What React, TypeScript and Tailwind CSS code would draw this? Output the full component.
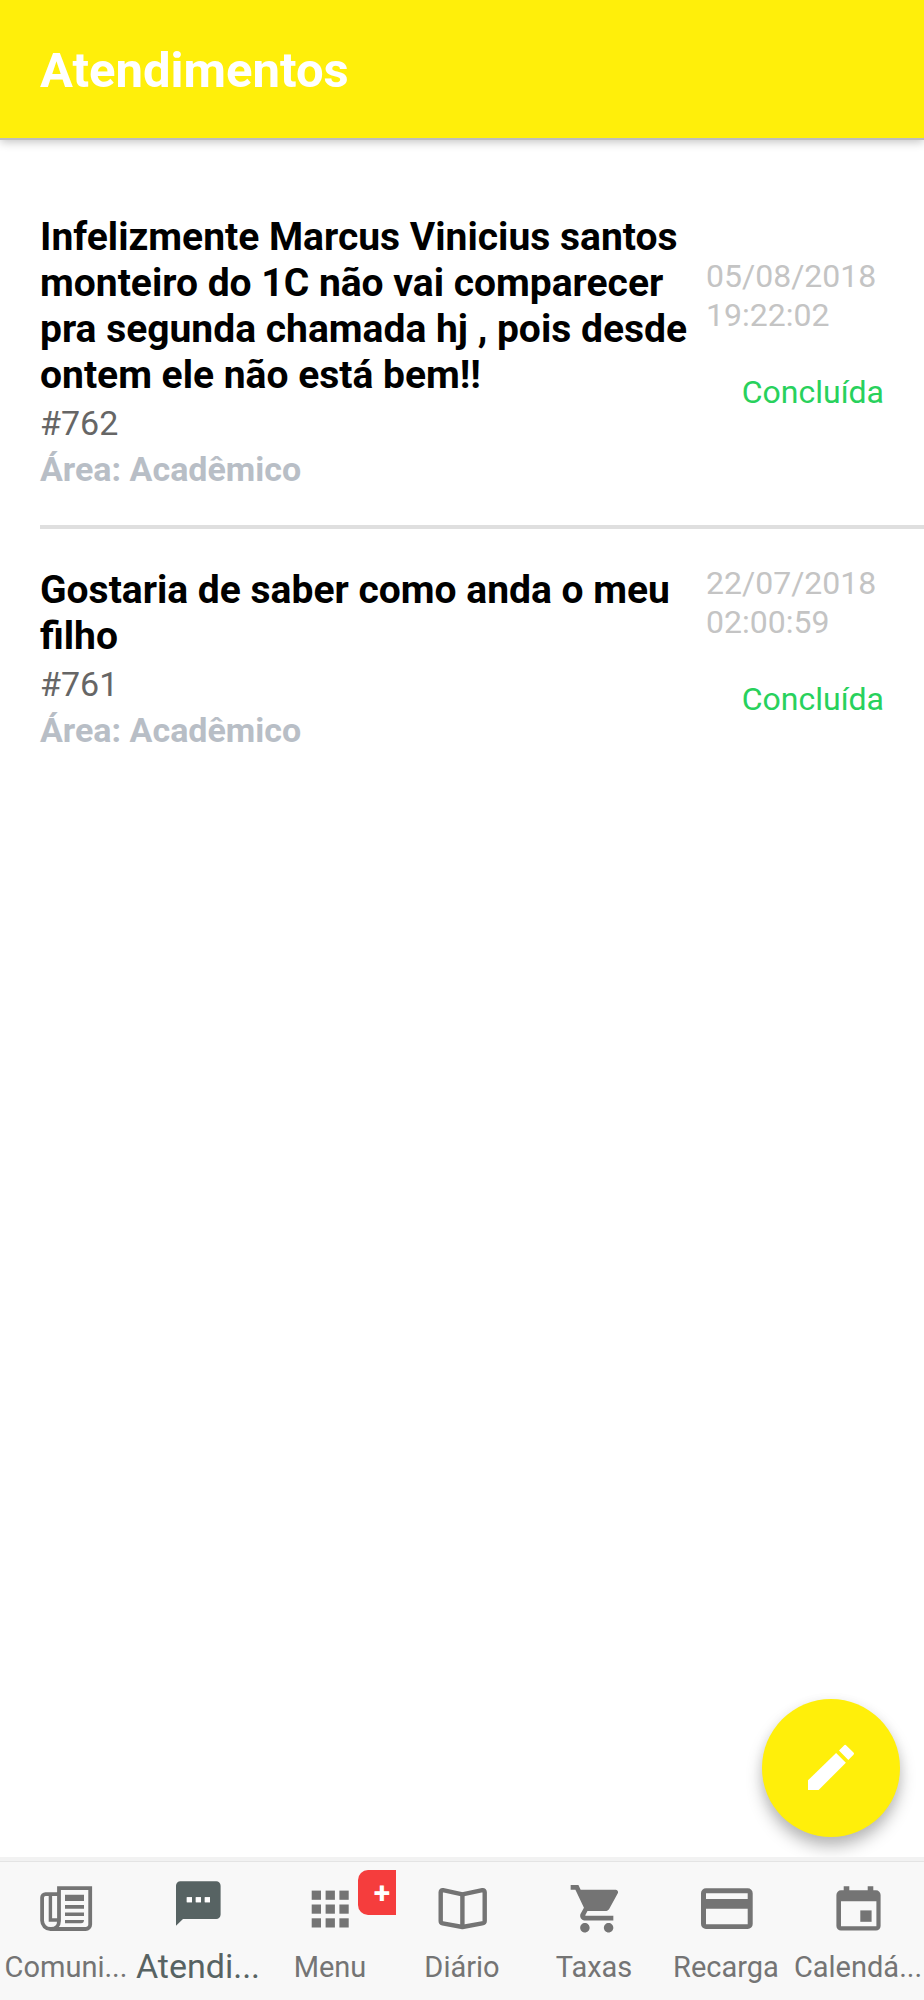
import type { ReactNode } from "react";

type Ticket = {
  id: string;
  title: string;
  area: string;
  date: string;
  time: string;
  status: string;
};

const tickets: Ticket[] = [
  {
    id: "#762",
    title:
      "Infelizmente Marcus Vinicius santos monteiro do 1C não vai comparecer pra segunda chamada hj , pois desde ontem ele não está bem!!",
    area: "Acadêmico",
    date: "05/08/2018",
    time: "19:22:02",
    status: "Concluída",
  },
  {
    id: "#761",
    title: "Gostaria de saber como anda o meu filho",
    area: "Acadêmico",
    date: "22/07/2018",
    time: "02:00:59",
    status: "Concluída",
  },
];

function Icon({ children }: { children: ReactNode }) {
  return (
    <svg viewBox="0 0 62 62" className="size-[62px] shrink-0" fill="currentColor" aria-hidden="true">
      {children}
    </svg>
  );
}

function NewsIcon() {
  return (
    <Icon>
      <g fill="none" stroke="currentColor" strokeWidth="3.8">
        <path d="M24 43V10.1H55.2V46.5a4.5 4.5 0 0 1-4.5 4.5H15.5A8.4 8.4 0 0 1 7.1 42.6V19.5a3.4 3.4 0 0 1 3.4-3.4H23" />
        <path d="M24 43c0 4.5-3 8-8 8" />
        <path d="M15.4 17V42H23" strokeWidth="3.4" />
      </g>
      <path d="M30 16.7h19V23H30zM30 27h19v3.7H30zM30 34.6h19v3.5H30zM30 42h19c0 2-1 3.3-3 3.3H30z" />
    </Icon>
  );
}

function ChatIcon() {
  return (
    <Icon>
      <path
        fillRule="evenodd"
        d="M13.4 8.3H49.2a4.4 4.4 0 0 1 4.4 4.4V41.6a4.4 4.4 0 0 1-4.4 4.4H16L9 52.8V12.7a4.4 4.4 0 0 1 4.4-4.4zM19.8 24.3v5H25v-5zM28.8 24.3v5H34v-5zM37.8 24.3v5H43v-5z"
      />
      <path fill="#fff" d="M19.8 24.3H25v5h-5.2zM28.8 24.3H34v5h-5.2zM37.8 24.3H43v5h-5.2z" />
    </Icon>
  );
}

function GridIcon() {
  return (
    <Icon>
      {[12.6, 26.5, 40.3].map((y) =>
        [12.7, 26.6, 40.4].map((x) => <rect key={`${x}-${y}`} x={x} y={y} width="9.3" height="9.2" />)
      )}
    </Icon>
  );
}

function BookIcon() {
  return (
    <Icon>
      <g fill="none" stroke="currentColor" strokeWidth="4.4" strokeLinejoin="round">
        <path d="M31.4 16.4 12 12.2q-2.3-.3-2.3 2V43q0 2 2 2.4L31.4 49l19.7-3.6q2.6-.4 2.6-2.4V14.2q0-2.3-2.3-2z" />
        <path d="M31.4 16.4V49" />
      </g>
    </Icon>
  );
}

function CartIcon() {
  return (
    <Icon>
      <g transform="translate(5.3 2.3) scale(2.37)">
        <path d="M7 18c-1.1 0-1.99.9-1.99 2S5.9 22 7 22s2-.9 2-2-.9-2-2-2zM1 2v2h2l3.6 7.59-1.35 2.45c-.16.28-.25.61-.25.96 0 1.1.9 2 2 2h12v-2H7.42c-.14 0-.25-.11-.25-.25l.03-.12.9-1.63h7.45c.75 0 1.41-.41 1.75-1.03l3.58-6.49c.08-.14.12-.31.12-.48 0-.55-.45-1-1-1H5.21l-.94-2H1zm16 16c-1.1 0-1.99.9-1.99 2s.89 2 1.99 2 2-.9 2-2-.9-2-2-2z" />
      </g>
    </Icon>
  );
}

function CardIcon() {
  return (
    <Icon>
      <path
        fillRule="evenodd"
        d="M11 10.2H52.7a5 5 0 0 1 5 5V46a5 5 0 0 1-5 5H11a5 5 0 0 1-5-5V15.2a5 5 0 0 1 5-5zM11 15.3V21H52.7V15.3zM11 30.8V46.2H52.7V30.8z"
      />
    </Icon>
  );
}

function CalendarIcon() {
  return (
    <Icon>
      <path
        fillRule="evenodd"
        d="M16.7 8.3h5.6v4H40.7v-4h5.6v4H49a4.6 4.6 0 0 1 4.6 4.6V48a4.6 4.6 0 0 1-4.6 4.6H14A4.6 4.6 0 0 1 9.4 48V16.9A4.6 4.6 0 0 1 14 12.3h2.7zM14 23.2V48.2H49.4V23.2z"
      />
      <path d="M33.3 32.4H44.6V43.8H33.3z" />
    </Icon>
  );
}

const tabs = [
  { label: "Comuni...", icon: <NewsIcon /> },
  { label: "Atendi...", icon: <ChatIcon />, active: true },
  { label: "Menu", icon: <GridIcon />, badge: "+" },
  { label: "Diário", icon: <BookIcon /> },
  { label: "Taxas", icon: <CartIcon /> },
  { label: "Recarga", icon: <CardIcon /> },
  { label: "Calendá...", icon: <CalendarIcon /> },
];

function TicketRow({ ticket, last }: { ticket: Ticket; last: boolean }) {
  return (
    <li className={`ml-10 flex items-center pt-[33px] pr-10 pb-[29px] ${last ? "" : "border-b-4 border-[#dfdfdf]"}`}>
      <div className="min-w-0 flex-1 pt-[5px] pb-1">
        <h2 className="text-[39px] leading-[46px] font-bold text-black">{ticket.title}</h2>
        <p className="mt-[2px] text-[34px] leading-[46px] text-[#666]">{ticket.id}</p>
        <p className="text-[34px] leading-[46px] font-bold text-[#b8bec6]">Área: {ticket.area}</p>
      </div>
      <div className="w-[178px] shrink-0 pb-[37px] text-[32px] leading-[39px]">
        <p className="text-[#c4c4c4]">
          {ticket.date} {ticket.time}
        </p>
        <p className="mt-[38px] text-right text-[#28d15c]">{ticket.status}</p>
      </div>
    </li>
  );
}

export default function App() {
  return (
    <div className="flex min-h-screen flex-col bg-white font-['Roboto',sans-serif]">
      <header className="flex h-[138px] items-center bg-[#ffef0a] px-10 pt-1 shadow-[0_2px_0_#bdbdbd,0_4px_9px_rgba(0,0,0,0.24)]">
        <h1 className="text-[49px] leading-[60px] font-bold text-white">Atendimentos</h1>
      </header>

      <main className="flex-1 pt-[38px]">
        <ul>
          {tickets.map((ticket, i) => (
            <TicketRow key={ticket.id} ticket={ticket} last={i === tickets.length - 1} />
          ))}
        </ul>
      </main>

      <div className="sticky bottom-0">
        <button
          type="button"
          aria-label="Novo atendimento"
          className="absolute right-6 bottom-[163px] flex size-[138px] items-center justify-center rounded-full bg-[#ffef0a] text-white shadow-[0_10px_16px_rgba(0,0,0,0.26),0_2px_12px_rgba(0,0,0,0.06)]"
        >
          <Icon>
            <path d="M36.1 16 45.9 25.7 18.6 53H8V43.3z" />
            <path d="M39 13.4 44 8.4q1.1-1.1 2.3 0l7.2 7.2q1.1 1.1 0 2.2l-5.2 5.2z" />
          </Icon>
        </button>
        <nav className="relative flex h-[138px] bg-[#f8f8f8] shadow-[0_-1px_0_#e4e4e4,0_-5px_0_#f2f2f2]">
          {tabs.map((tab) => (
            <a
              key={tab.label}
              href="#"
              aria-current={tab.active ? "page" : undefined}
              className={`relative flex min-w-0 flex-1 basis-0 flex-col items-center justify-between overflow-hidden whitespace-nowrap ${
                tab.active ? "pt-[11px] pb-4 text-[34px] text-[#576363]" : "pt-4 pb-[15px] text-[29px] text-[#747474]"
              }`}
            >
              {tab.icon}
              <span className="leading-[36px]">{tab.label}</span>
              {tab.badge && (
                <span className="absolute top-2 right-0 flex h-[45px] w-[38px] items-center justify-end rounded-l-[10px] bg-[#f53d3d] pr-[6px] text-[30px] leading-[45px] font-bold text-white">
                  {tab.badge}
                </span>
              )}
            </a>
          ))}
        </nav>
      </div>
    </div>
  );
}
